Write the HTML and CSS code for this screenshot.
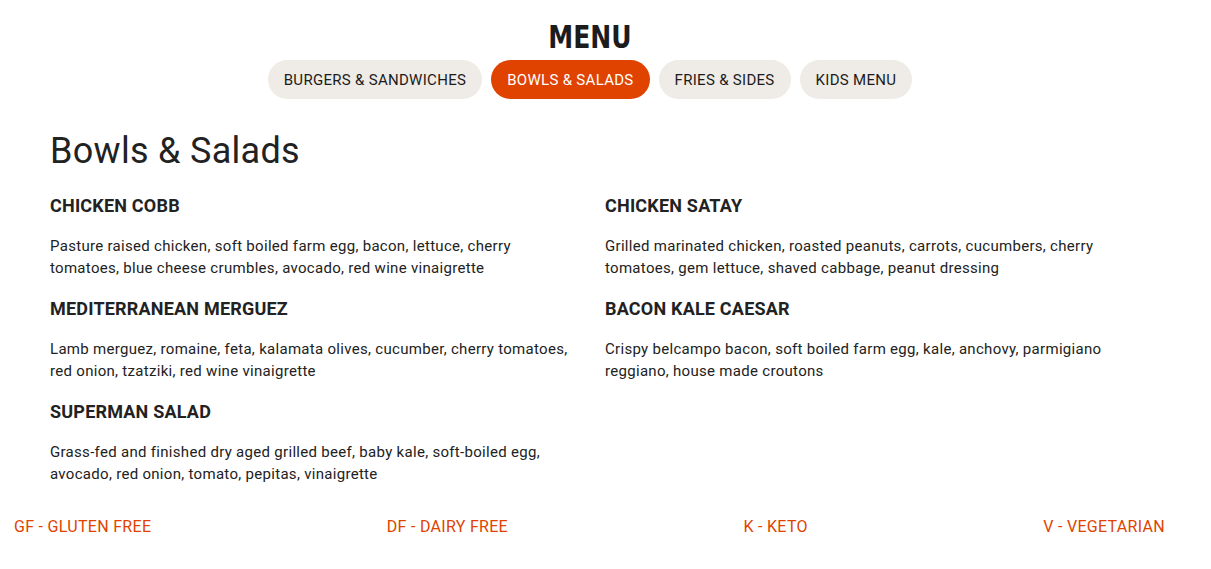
FILE: index.html
```html
<!DOCTYPE html>
<html>
<head>
<meta charset="utf-8">
<link rel="stylesheet" href="styles.css">
</head>
<body>
<header class="top">
  <h1 class="menu-title">MENU</h1>
  <nav class="tabs">
    <span class="tab">BURGERS &amp; SANDWICHES</span>
    <span class="tab active">BOWLS &amp; SALADS</span>
    <span class="tab">FRIES &amp; SIDES</span>
    <span class="tab">KIDS MENU</span>
  </nav>
</header>
<main class="content">
  <h2 class="section-title">Bowls &amp; Salads</h2>
  <div class="items">
    <div class="item">
      <h3 class="item-name">CHICKEN COBB</h3>
      <p class="item-desc">Pasture raised chicken, soft boiled farm egg, bacon, lettuce, cherry tomatoes, blue cheese crumbles, avocado, red wine vinaigrette</p>
    </div>
    <div class="item">
      <h3 class="item-name">CHICKEN SATAY</h3>
      <p class="item-desc">Grilled marinated chicken, roasted peanuts, carrots, cucumbers, cherry tomatoes, gem lettuce, shaved cabbage, peanut dressing</p>
    </div>
    <div class="item">
      <h3 class="item-name">MEDITERRANEAN MERGUEZ</h3>
      <p class="item-desc">Lamb merguez, romaine, feta, kalamata olives, cucumber, cherry tomatoes, red onion, tzatziki, red wine vinaigrette</p>
    </div>
    <div class="item">
      <h3 class="item-name">BACON KALE CAESAR</h3>
      <p class="item-desc">Crispy belcampo bacon, soft boiled farm egg, kale, anchovy, parmigiano reggiano, house made croutons</p>
    </div>
    <div class="item">
      <h3 class="item-name">SUPERMAN SALAD</h3>
      <p class="item-desc">Grass-fed and finished dry aged grilled beef, baby kale, soft-boiled egg, avocado, red onion, tomato, pepitas, vinaigrette</p>
    </div>
  </div>
</main>
<footer class="legend">
  <span>GF - GLUTEN FREE</span>
  <span>DF - DAIRY FREE</span>
  <span>K - KETO</span>
  <span>V - VEGETARIAN</span>
</footer>
</body>
</html>
```

FILE: styles.css
```css
* { box-sizing: border-box; }
html, body { margin: 0; padding: 0; background: #fff; }
body {
  font-family: Roboto, "Liberation Sans", sans-serif;
  color: #222;
}
.top {
  display: flex;
  flex-direction: column;
  align-items: center;
  padding: 19px 31px 0 0;
}
.menu-title {
  display: inline-block;
  margin: 0;
  font-family: "DejaVu Sans Condensed", "DejaVu Sans", sans-serif;
  font-weight: 700;
  font-size: 32px;
  line-height: 36px;
  transform: scaleX(0.87);
  color: #1c1c1c;
}
.tabs {
  display: flex;
  gap: 9px;
  margin-top: 5px;
}
.tab {
  display: flex;
  align-items: center;
  height: 39px;
  padding: 0 16px;
  border-radius: 20px;
  background: #efebe6;
  font-size: 15px;
  letter-spacing: 0.3px;
  color: #1c1c1c;
}
.tab.active {
  background: #e04300;
  color: #fff;
}
.content {
  padding: 0 51px 0 50px;
}
.section-title {
  margin: 30px 0 0;
  font-weight: 400;
  font-size: 36px;
  line-height: 44px;
  letter-spacing: 0.3px;
  color: #222;
}
.items {
  display: grid;
  grid-template-columns: 1fr 1fr;
  margin-top: 21px;
}
.item {
  padding-right: 30px;
  height: 103px;
}
.item-name {
  margin: 0;
  font-size: 18px;
  font-weight: 700;
  line-height: 24px;
  letter-spacing: 0.2px;
  color: #222;
}
.item-desc {
  margin: 17px 0 0;
  font-size: 15px;
  line-height: 22px;
  letter-spacing: 0.3px;
  color: #222;
}
.legend {
  display: flex;
  justify-content: space-between;
  padding: 0 46px 0 14px;
  margin-top: 14px;
  font-size: 16px;
  letter-spacing: 0.3px;
  color: #e04300;
}
```
